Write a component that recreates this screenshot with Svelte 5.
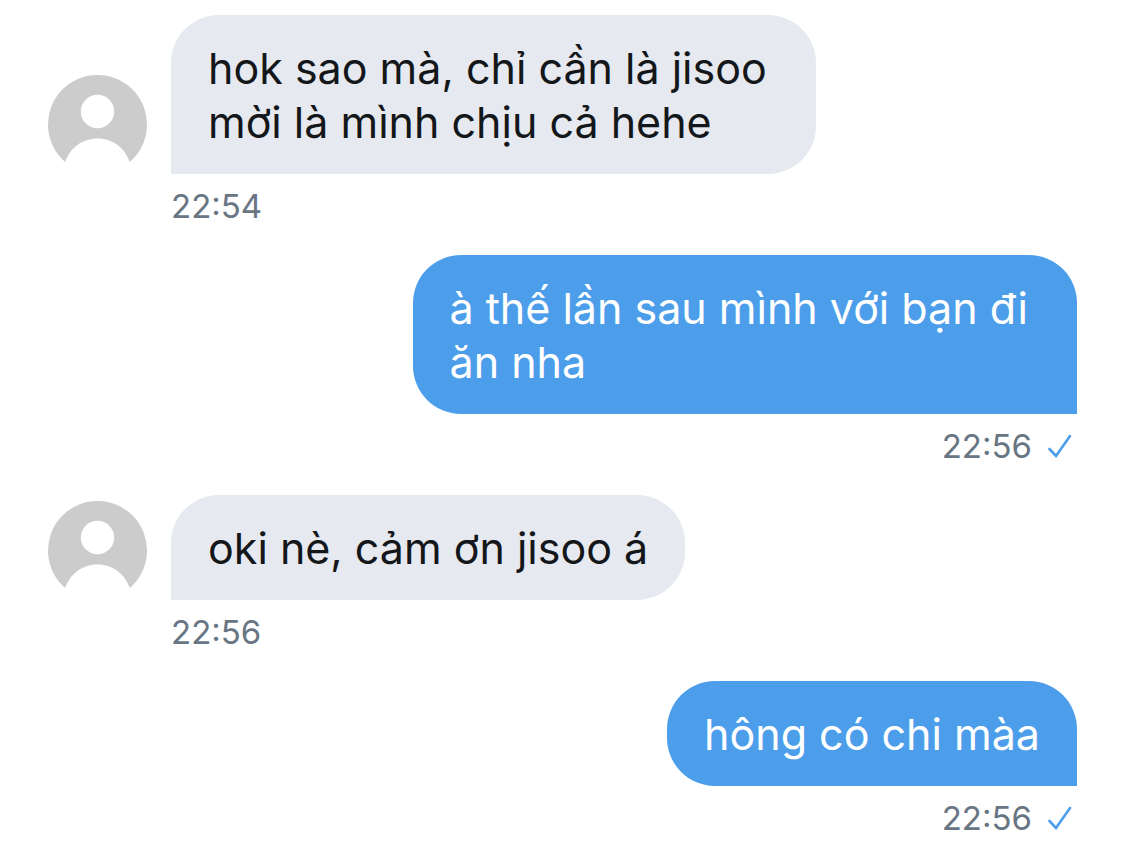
<script lang="ts">
	type Message = { id: number; text: string; time: string; own: boolean };

	const messages: Message[] = [
		{ id: 1, text: 'hok sao mà, chỉ cần là jisoo \nmời là mình chịu cả hehe', time: '22:54', own: false },
		{ id: 2, text: 'à thế lần sau mình với bạn đi \năn nha', time: '22:56', own: true },
		{ id: 3, text: 'oki nè, cảm ơn jisoo á', time: '22:56', own: false },
		{ id: 4, text: 'hông có chi màa', time: '22:56', own: true }
	];
</script>

<main class="chat">
	{#each messages as message (message.id)}
		<article class="message" class:own={message.own}>
			<div class="row">
				{#if !message.own}
					<svg class="avatar" viewBox="0 0 99 99" aria-hidden="true">
						<path
							class="avatar-bg"
							d="M17.2 87A49.5 49.5 0 1 1 81.8 87C77 73 65 63.5 49.5 63.5S22 73 17.2 87Z"
						/>
						<circle class="avatar-head" cx="49.5" cy="36.5" r="16.7" />
					</svg>
				{/if}
				<p class="bubble">{message.text}</p>
			</div>
			<div class="meta">
				<time>{message.time}</time>
				{#if message.own}
					<svg class="check" viewBox="0 0 24 24" aria-hidden="true">
						<path d="M1.5 15L8 22L22 2" />
					</svg>
				{/if}
			</div>
		</article>
	{/each}
</main>

<style>
	:global(body) {
		margin: 0;
		background: #fff;
	}

	.chat {
		display: flex;
		flex-direction: column;
		gap: 28px;
		padding: 15px 48px 0;
		font-family: Inter, 'Noto Sans', sans-serif;
	}

	.message {
		display: flex;
		flex-direction: column;
		align-items: flex-start;
	}

	.own {
		align-items: flex-end;
	}

	.row {
		display: flex;
		align-items: flex-end;
		gap: 24px;
	}

	.avatar {
		flex: none;
		width: 99px;
		height: 99px;
	}

	.avatar-bg {
		fill: #ccc;
	}

	.avatar-head {
		fill: #fff;
	}

	.bubble {
		margin: 0;
		padding: 26px 37px 25px;
		border-radius: 48px 48px 48px 0;
		background: #e6e9f0;
		color: #14171a;
		font-size: 43px;
		line-height: 54px;
		white-space: break-spaces;
	}

	.own .bubble {
		border-radius: 48px 48px 0 48px;
		background: #4c9eeb;
		color: #fff;
	}

	.meta {
		display: flex;
		align-items: center;
		gap: 16px;
		padding: 12px 5px 1px 123px;
		color: #687684;
		font-size: 33px;
		line-height: 40px;
	}

	.check {
		width: 24px;
		height: 24px;
		fill: none;
		stroke: #4c9eeb;
		stroke-width: 2.6;
		stroke-linecap: round;
	}
</style>
